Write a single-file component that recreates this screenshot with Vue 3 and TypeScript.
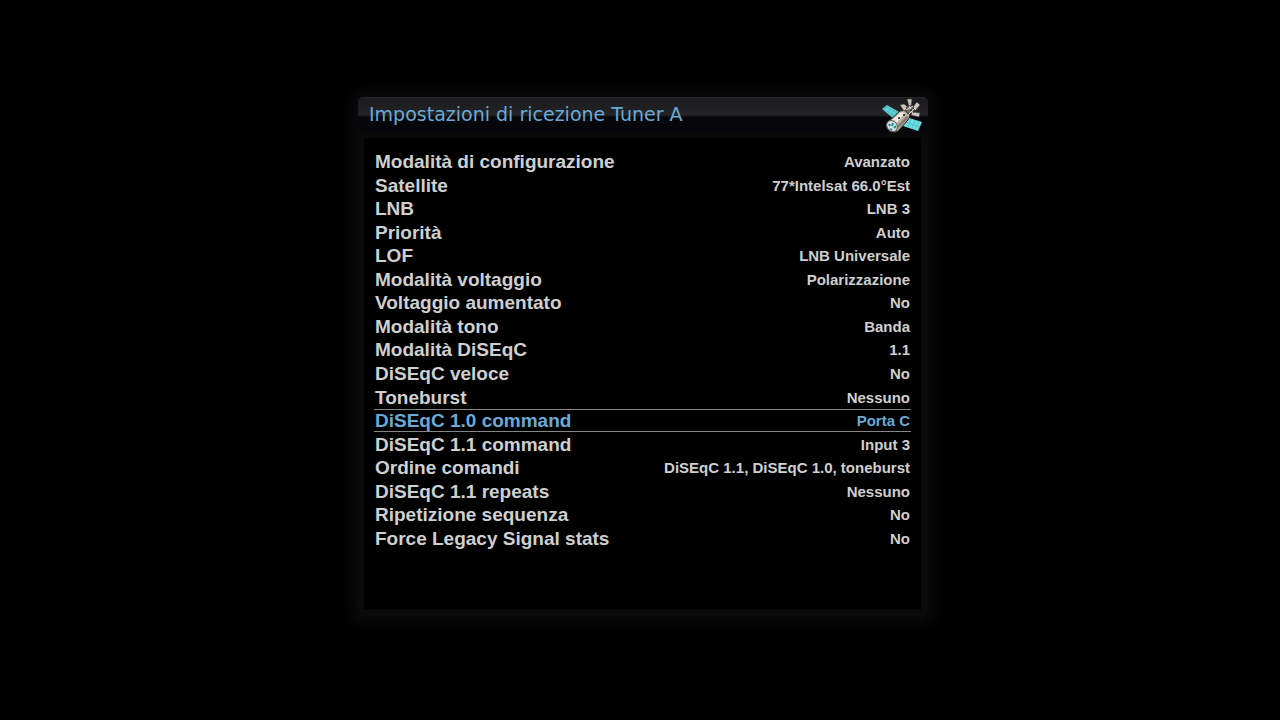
<script setup lang="ts">
import { ref } from 'vue'

interface Setting {
  label: string
  value: string
}

const settings: Setting[] = [
  { label: 'Modalità di configurazione', value: 'Avanzato' },
  { label: 'Satellite', value: '77*Intelsat 66.0°Est' },
  { label: 'LNB', value: 'LNB 3' },
  { label: 'Priorità', value: 'Auto' },
  { label: 'LOF', value: 'LNB Universale' },
  { label: 'Modalità voltaggio', value: 'Polarizzazione' },
  { label: 'Voltaggio aumentato', value: 'No' },
  { label: 'Modalità tono', value: 'Banda' },
  { label: 'Modalità DiSEqC', value: '1.1' },
  { label: 'DiSEqC veloce', value: 'No' },
  { label: 'Toneburst', value: 'Nessuno' },
  { label: 'DiSEqC 1.0 command', value: 'Porta C' },
  { label: 'DiSEqC 1.1 command', value: 'Input 3' },
  { label: 'Ordine comandi', value: 'DiSEqC 1.1, DiSEqC 1.0, toneburst' },
  { label: 'DiSEqC 1.1 repeats', value: 'Nessuno' },
  { label: 'Ripetizione sequenza', value: 'No' },
  { label: 'Force Legacy Signal stats', value: 'No' },
]

const selected = ref(11)
</script>

<template>
  <main class="screen">
    <section class="dialog">
      <header class="titlebar">
        <h1>Impostazioni di ricezione Tuner A</h1>
        <svg class="satellite" viewBox="0 1 42 36" aria-hidden="true">
          <path d="M1 12 6 8 18 15 13 22Z" fill="#5fd0d8" />
          <path d="M3 13 14 19M5 9 16 16M6 8 3 13M10 10 7 16M13 12 10 19" stroke="#3fa5b0" stroke-width=".5" fill="none" />
          <path d="M25 20 41 25 37 34 22 29Z" fill="#6ddce3" />
          <path d="M24 25 39 30M30 22 27 30M34 23 31 32M38 24 34 33" stroke="#45acb6" stroke-width=".5" fill="none" />
          <path d="M7 25 19 14Q26 12 29 18L27 23 17 34Q12 37 8 33Q4 29 7 25Z" fill="#b9b1a6" stroke="#2b2623" />
          <path d="M10 24 20 15 24 16 14 28Z" fill="#efe9de" />
          <path d="M17 31 28 21 26 19 17 28Z" fill="#81776d" />
          <circle cx="18" cy="21" r="1" fill="#171515" />
          <circle cx="23" cy="18" r="1" fill="#171515" />
          <ellipse cx="11" cy="29" rx="5" ry="6" transform="rotate(-40 11 29)" fill="#d9e2de" stroke="#5d5a53" />
          <path d="M8 27 9 29M12 26 11 29M15 29 13 31M9 32 11 33" stroke="#168b9c" stroke-width="2" fill="none" />
          <path d="M26 2 31 2 30 9 28 9ZM32 10 36 5 39 8 34 14ZM32 15 39 16 38 20 30 18ZM19 8 23 7 28 11 23 14Z" fill="#cdc6be" stroke="#4a443f" stroke-width=".6" />
          <circle cx="29" cy="13" r="4" fill="#77716c" stroke="#3a3430" />
          <path d="M25 13 32 9M28 17 34 11M28 9 32 17" stroke="#e5dfd6" fill="none" />
          <circle cx="30" cy="13" r="1" fill="#272322" />
        </svg>
      </header>
      <div class="body">
        <ul class="settings">
          <li v-for="(item, index) in settings" :key="item.label">
            <button
              type="button"
              class="row"
              :class="{ active: index === selected }"
              @click="selected = index"
            >
              <span class="label">{{ item.label }}</span>
              <span class="value">{{ item.value }}</span>
            </button>
          </li>
        </ul>
      </div>
    </section>
  </main>
</template>

<style>
body {
  background: #000;
}
</style>

<style scoped>
.screen {
  box-sizing: border-box;
  min-height: 100vh;
  display: flex;
  justify-content: center;
  align-items: flex-start;
  padding: 97px 0 40px 6px;
  background: #000;
  font-family: "Liberation Sans", Arial, sans-serif;
}

.dialog {
  box-sizing: border-box;
  width: 100%;
  max-width: 570px;
  padding-bottom: 8px;
  background: #0a0a0a;
  border-radius: 6px;
  box-shadow: 0 0 12px 8px #090909;
}

.titlebar {
  box-sizing: border-box;
  height: 36px;
  display: flex;
  align-items: center;
  justify-content: space-between;
  padding: 0 5px 0 11px;
  border-top: 1px solid #252527;
  border-radius: 5px 5px 0 0;
  background: linear-gradient(#1b1b1d 0, #242426 17px, #07070b 19px, #07070b 100%);
}

h1 {
  margin: 0;
  padding-bottom: 4px;
  font: 400 19px/30px "DejaVu Sans", Verdana, sans-serif;
  color: #69aad6;
}

.satellite {
  width: 42px;
  height: 36px;
}

.body {
  box-sizing: border-box;
  min-height: 471px;
  margin: 5px 7px 0 6px;
  padding: 12px 10px;
  background: #000;
}

.settings {
  min-height: 400px;
  margin: 0;
  padding: 0;
  display: grid;
  grid-auto-rows: 1fr;
  list-style: none;
}

li {
  display: flex;
}

.row {
  flex: 1;
  display: flex;
  align-items: center;
  justify-content: space-between;
  padding: 0 1px;
  border: solid transparent;
  border-width: 1px 0;
  background: none;
  color: #cfcfcf;
  font: 700 19px/21px "Liberation Sans", Arial, sans-serif;
  text-align: left;
  white-space: nowrap;
}

.value {
  font-size: 15px;
}

.active {
  border-color: #858585;
  color: #69aad6;
}
</style>
